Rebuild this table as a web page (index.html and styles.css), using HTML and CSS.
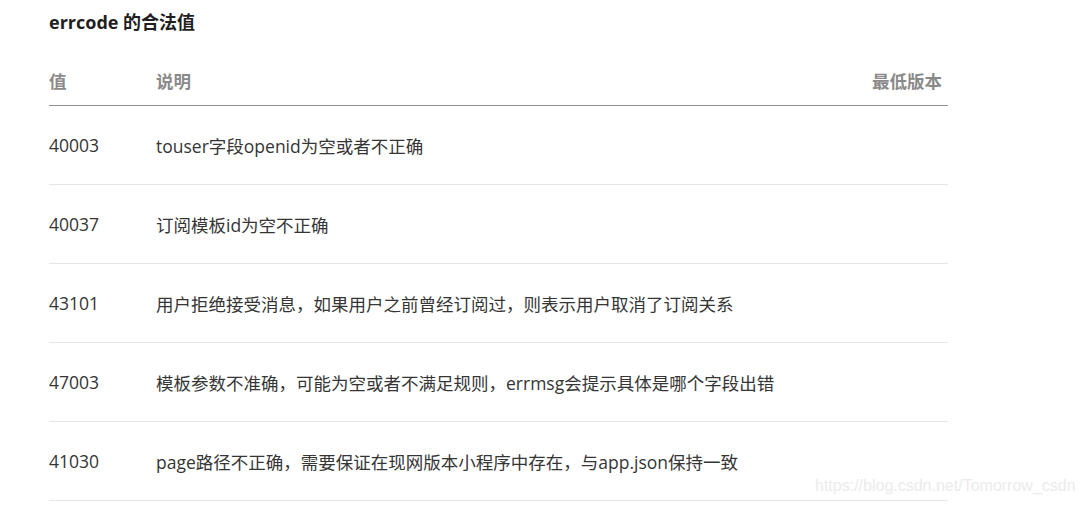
FILE: index.html
```html
<!DOCTYPE html>
<html lang="zh-CN">
<head>
<meta charset="utf-8">
<link rel="stylesheet" href="styles.css">
</head>
<body>
<div class="doc">
  <h4 class="title">errcode 的合法值</h4>
  <table class="codes">
    <thead>
      <tr><th class="c-code">值</th><th class="c-desc">说明</th><th class="c-ver">最低版本</th></tr>
    </thead>
    <tbody>
      <tr><td>40003</td><td>touser字段openid为空或者不正确</td><td></td></tr>
      <tr><td>40037</td><td>订阅模板id为空不正确</td><td></td></tr>
      <tr><td>43101</td><td>用户拒绝接受消息，如果用户之前曾经订阅过，则表示用户取消了订阅关系</td><td></td></tr>
      <tr><td>47003</td><td>模板参数不准确，可能为空或者不满足规则，errmsg会提示具体是哪个字段出错</td><td></td></tr>
      <tr><td>41030</td><td>page路径不正确，需要保证在现网版本小程序中存在，与app.json保持一致</td><td></td></tr>
    </tbody>
  </table>
</div>
<div class="watermark">https://blog.csdn.net/Tomorrow_csdn</div>
</body>
</html>
```
FILE: styles.css
```css
html, body {
  margin: 0;
  padding: 0;
  background: #fff;
}
body {
  font-family: "Open Sans", "Noto Sans CJK SC", sans-serif;
  color: #353535;
  width: 1082px;
  height: 505px;
  overflow: hidden;
  position: relative;
}
.doc {
  padding: 10px 0 0 49px;
  width: 899px;
}
.title {
  margin: 0;
  font-size: 18px;
  line-height: 24px;
  font-weight: 700;
  color: #1f1f1f;
}
.codes {
  margin-top: 21px;
  width: 899px;
  border-collapse: collapse;
  font-size: 17.5px;
}
.codes th {
  height: 50px;
  padding: 0;
  font-weight: 700;
  color: #8a8a8a;
  text-align: left;
  vertical-align: middle;
  border-bottom: 1px solid #8f8f8f;
}
.codes th.c-code { width: 107px; }
.codes th.c-ver { text-align: right; padding-right: 6px; width: 120px; }
.codes td {
  height: 78px;
  padding: 0;
  vertical-align: middle;
  border-bottom: 1px solid #e6e6e6;
  color: #353535;
}
.watermark {
  position: absolute;
  left: 815px;
  top: 477px;
  font-family: "Liberation Sans", Arial, sans-serif;
  font-size: 16px;
  color: #ebebeb;
}
```
